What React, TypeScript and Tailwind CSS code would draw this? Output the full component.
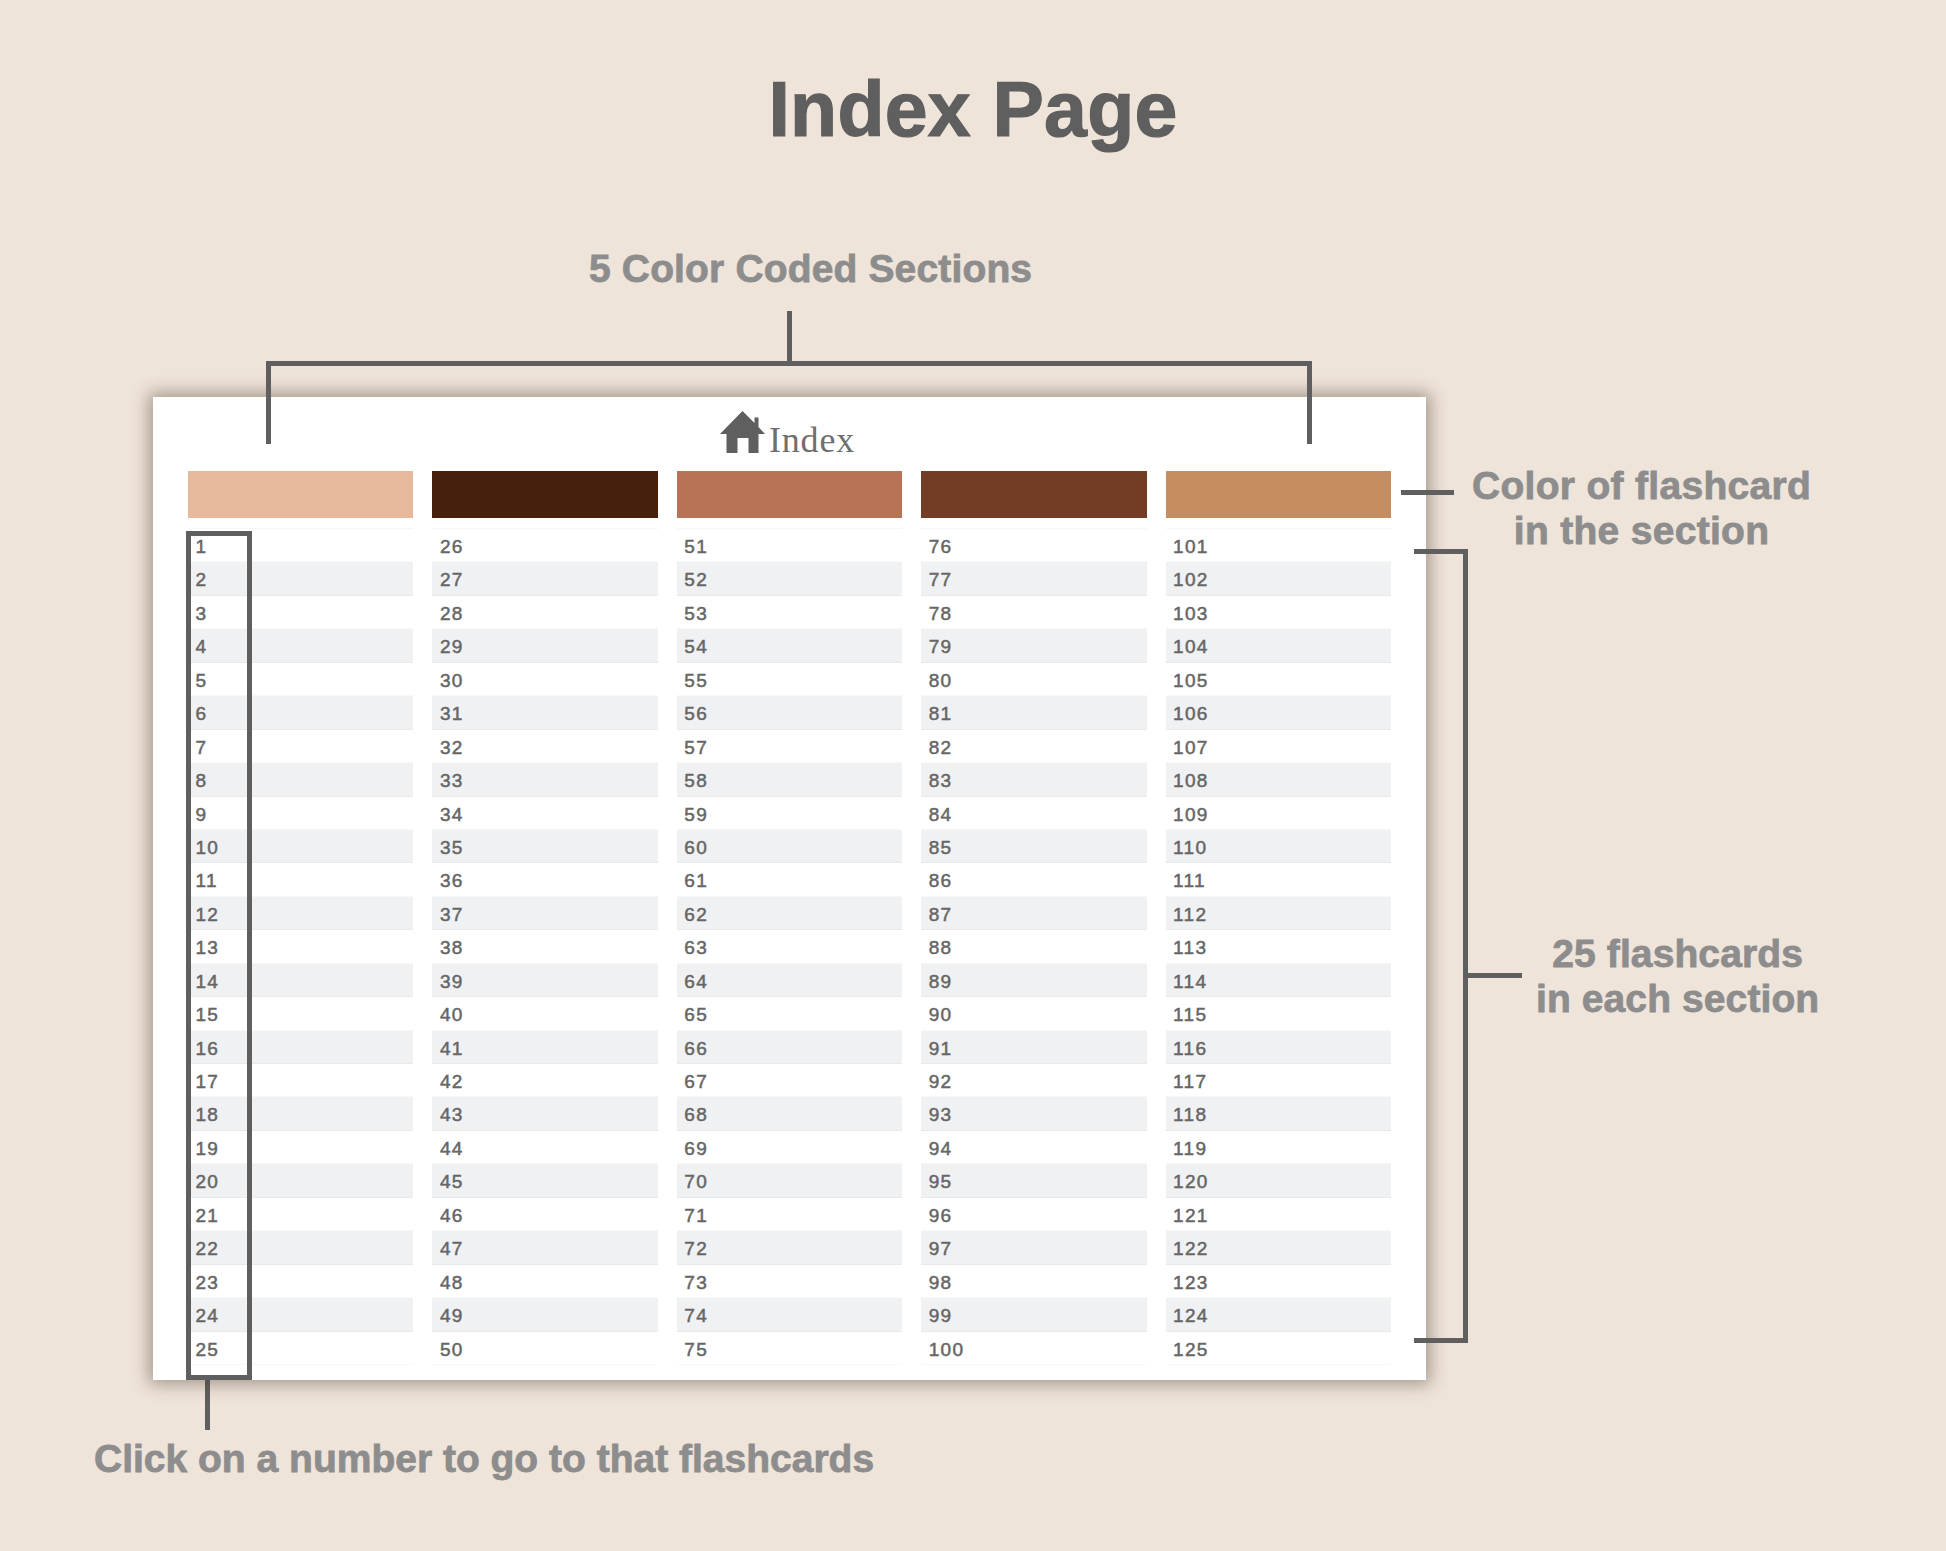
const sections = [
  { color: "bg-[#e6b89c]", start: 1 },
  { color: "bg-[#47200b]", start: 26 },
  { color: "bg-[#b87255]", start: 51 },
  { color: "bg-[#733c25]", start: 76 },
  { color: "bg-[#c68e60]", start: 101 },
];

const labelCls =
  "text-center font-bold text-[#8d8d8d] whitespace-nowrap text-[39px] leading-[44.5px] [-webkit-text-stroke:0.8px_#8d8d8d]";

function House() {
  return (
    <svg viewBox="0 0 45 42" className="w-[45px] h-[42px] fill-[#5f5f5f]">
      <path d="M22.5 0 L34.5 12 V6.5 H38.5 V16 L45 23 H38.5 V42 H28.5 V27 H17.5 V42 H6.5 V23 H0 Z" />
    </svg>
  );
}

export default function App() {
  return (
    <div className="flex flex-col w-[1946px] h-[1551px] overflow-hidden bg-[#efe4da] font-['Liberation_Sans',Arial,sans-serif]">
      <h1 className="pt-[64px] text-center font-bold text-[77px] leading-[90px] text-[#5f5f5f] tracking-[0.25px] [-webkit-text-stroke:1.2px_#5f5f5f]">
        Index Page
      </h1>

      <div className={labelCls + " tracking-[0.15px] mt-[93px] ml-[589px] self-start"}>5 Color Coded Sections</div>

      {/* Top bracket */}
      <div className="ml-[787px] mt-[19.5px] w-[5px] h-[49.5px] bg-[#5f5f5f]" />
      <div className="relative z-10 ml-[265.5px] w-[1046.5px] h-[83.5px] -mb-[47px] border-x-[5px] border-t-[5px] border-[#5f5f5f]" />

      <div className="flex items-start">
        {/* Card */}
        <div className="relative ml-[153px] w-[1273px] h-[983px] shrink-0 bg-white px-[35px] shadow-[0_0_16px_4px_rgba(70,55,40,0.45)]">
          <div className="h-[73.5px] pl-[532px] flex items-end pb-[17.5px]">
            <House />
            <span className="ml-[4px] font-['Liberation_Serif',serif] text-[36px] leading-[36px] tracking-[0.8px] text-[#6f6f6f] -mb-[5px]">
              Index
            </span>
          </div>

          <div className="grid grid-cols-5 gap-x-[19px]">
            {sections.map((s) => (
              <div key={s.start}>
                <div className={"h-[47.5px] mb-[10px] " + s.color} />
                <div className="border-t border-[#f6f6f6]">
                  {Array.from({ length: 25 }, (_, i) => (
                    <div
                      key={i}
                      className={
                        "h-[33.45px] pl-[7.5px] pt-[7px] text-[19px] leading-[22px] tracking-[1.3px] font-normal text-[#666666] [-webkit-text-stroke:0.5px_#666666] " +
                        (i % 2 === 1
                          ? "bg-[#f0f1f3] border-b border-[#e8e9eb]"
                          : "bg-white border-b border-[#f8f8f8]")
                      }
                    >
                      {s.start + i}
                    </div>
                  ))}
                </div>
              </div>
            ))}
          </div>

          {/* Column highlight */}
          <div className="absolute left-[33px] top-[134px] w-[66px] h-[849px] border-[5px] border-[#5f5f5f]" />
        </div>

        {/* Right callouts */}
        <div className="relative z-10 -ml-[25px] pt-[67px] flex flex-col">
          <div className="flex items-start h-[84.5px]">
            <div className="mt-[25.5px] w-[53px] h-[5px] bg-[#5f5f5f]" />
            <div className={labelCls + " tracking-[0.3px] ml-[18px]"}>
              Color of flashcard
              <br />
              in the section
            </div>
          </div>
          <div className="flex items-start ml-[13px]">
            <div className="w-[54px] h-[794px] border-y-[5px] border-r-[5px] border-[#5f5f5f]" />
            <div className="mt-[424px] w-[54px] h-[5px] bg-[#5f5f5f]" />
            <div className={labelCls + " tracking-[0.1px] mt-[383.5px] ml-[14px]"}>
              25 flashcards
              <br />
              in each section
            </div>
          </div>
        </div>
      </div>

      <div className="ml-[205px] w-[5px] h-[50px] bg-[#5f5f5f]" />
      <div className={labelCls + " mt-[7px] ml-[94px] self-start"}>Click on a number to go to that flashcards</div>
    </div>
  );
}
